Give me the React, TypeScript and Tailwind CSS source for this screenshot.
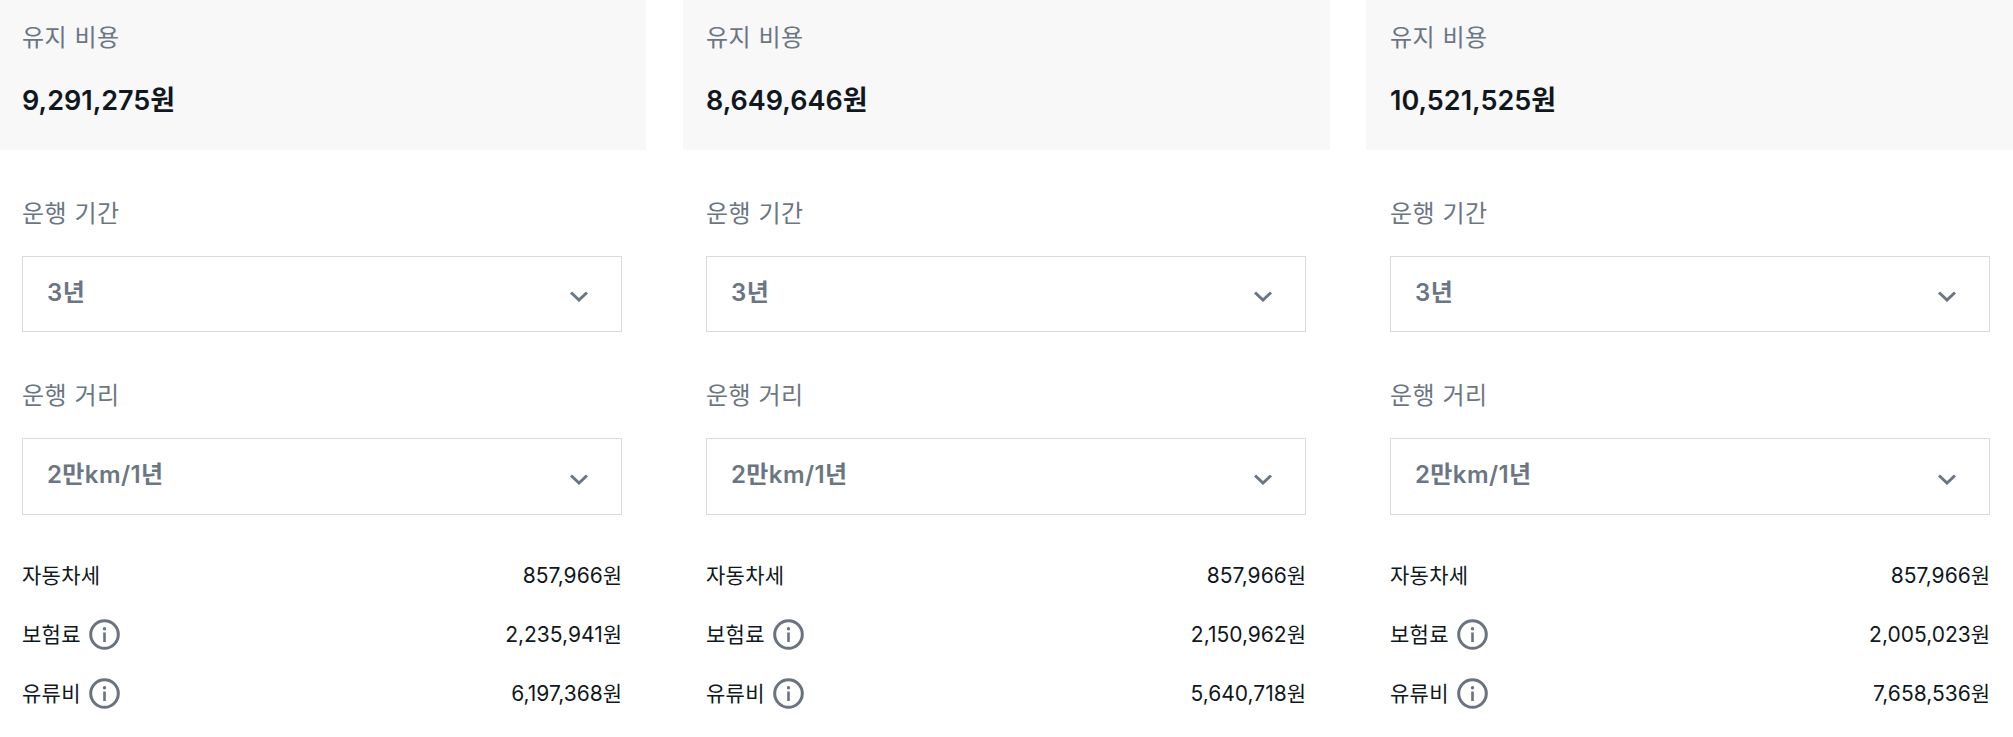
const font = 'font-["Inter","Noto_Sans_CJK_KR",sans-serif]';

interface Plan {
  total: string;
  insurance: string;
  fuel: string;
  pad: string;
}

const plans: Plan[] = [
  { total: '9,291,275원', insurance: '2,235,941원', fuel: '6,197,368원', pad: 'pl-[22px] pr-[24px]' },
  { total: '8,649,646원', insurance: '2,150,962원', fuel: '5,640,718원', pad: 'pl-[23.5px] pr-[23.5px]' },
  { total: '10,521,525원', insurance: '2,005,023원', fuel: '7,658,536원', pad: 'pl-[24px] pr-[23px]' },
];

function InfoIcon() {
  return (
    <svg width="31" height="31" viewBox="0 0 31 31" fill="none" className="shrink-0">
      <circle cx="15.5" cy="15.5" r="13.8" stroke="#6b7280" strokeWidth="3" />
      <circle cx="15.5" cy="9.8" r="1.7" fill="#6b7280" />
      <path d="M15.5 13.5v9.5" stroke="#6b7280" strokeWidth="2.6" />
    </svg>
  );
}

function Chevron() {
  return (
    <svg width="18" height="11" viewBox="0 0 18 11" fill="none" className="mt-[5px]">
      <path d="M1 1.5 9 9l8-7.5" stroke="#6b7684" strokeWidth="3" />
    </svg>
  );
}

function Field({ label, value, top, height }: { label: string; value: string; top: string; height: string }) {
  return (
    <div className={top}>
      <div className="text-[24px] leading-[34px] tracking-[0.5px] text-[#6b7684]">{label}</div>
      <div className={`mt-[25px] flex items-center justify-between border border-[#d9dadc] pr-[33px] pl-[24px] ${height}`}>
        <span className="-mt-[3px] text-[24px] font-semibold tracking-[0.4px] text-[#6b7684]">{value}</span>
        <Chevron />
      </div>
    </div>
  );
}

function Row({ label, value, info }: { label: string; value: string; info?: boolean }) {
  return (
    <div className="flex h-[59px] items-center justify-between text-[21px] text-[#0f1720]">
      <div className="flex items-center gap-2">
        <span className="tracking-[0.3px]">{label}</span>
        {info && <InfoIcon />}
      </div>
      <span>{value}</span>
    </div>
  );
}

function Column({ plan }: { plan: Plan }) {
  return (
    <div className="min-w-0">
      <div className={`h-[150px] bg-[#f8f8f8] pt-[21px] ${plan.pad}`}>
        <div className="text-[24px] leading-[34px] tracking-[0.5px] text-[#6b7684]">유지 비용</div>
        <div className="mt-[26px] text-[27px] leading-[40px] font-semibold text-[#0f1720]">{plan.total}</div>
      </div>
      <div className={plan.pad}>
        <Field label="운행 기간" value="3년" top="mt-[47px]" height="h-[76px]" />
        <Field label="운행 거리" value="2만km/1년" top="mt-[47px]" height="h-[77px]" />
        <div className="mt-[31px]">
          <Row label="자동차세" value="857,966원" />
          <Row label="보험료" value={plan.insurance} info />
          <Row label="유류비" value={plan.fuel} info />
        </div>
      </div>
    </div>
  );
}

export default function App() {
  return (
    <div className={`grid h-[737px] grid-cols-[646px_647px_647px] gap-x-[36.5px] overflow-hidden bg-white ${font}`}>
      {plans.map((p) => (
        <Column key={p.total} plan={p} />
      ))}
    </div>
  );
}
